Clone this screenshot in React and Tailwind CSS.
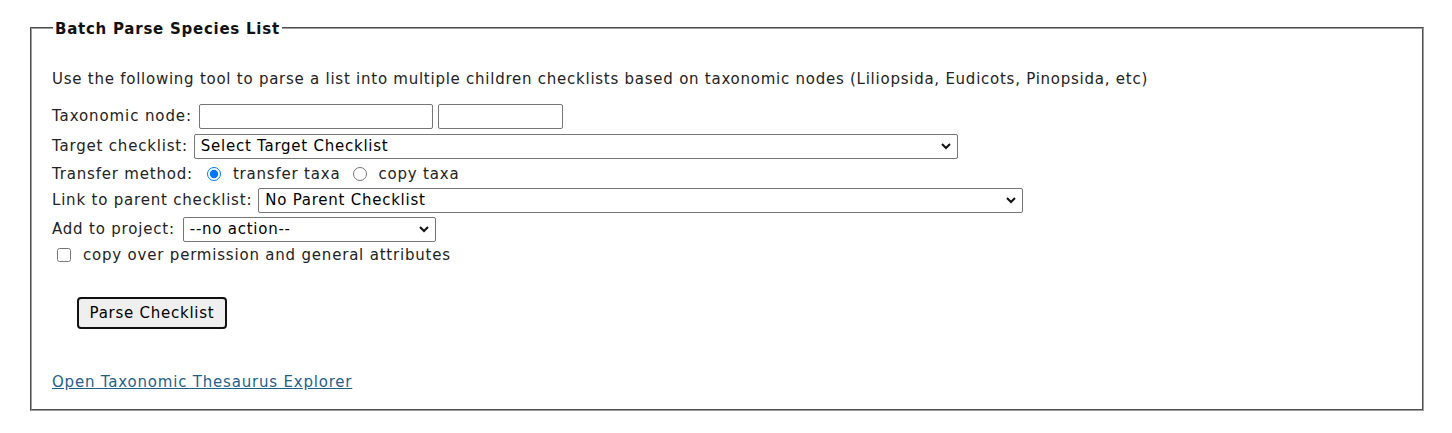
import { useState } from "react";

function Chevron() {
  return (
    <svg
      className="pointer-events-none absolute right-[6px] top-1/2 -translate-y-1/2"
      width="12"
      height="8"
      viewBox="0 0 12 8"
      fill="none"
    >
      <path d="M2 2l4 4 4-4" stroke="#111" strokeWidth="2" />
    </svg>
  );
}

function Select({ width, value }) {
  return (
    <div className="relative inline-block" style={{ width }}>
      <select className="h-[25px] w-full appearance-none rounded-[2px] border border-[#767676] bg-white pl-[6px] pr-6 text-[15px] tracking-[0.75px] text-black">
        <option>{value}</option>
      </select>
      <Chevron />
    </div>
  );
}

function App() {
  const [method, setMethod] = useState("transfer");

  return (
    <div
      className="min-h-[433px] bg-white pl-[30px] pt-[17px] text-[15px] tracking-[0.8px] text-[#222]"
      style={{ fontFamily: '"DejaVu Sans", Verdana, sans-serif' }}
    >
      <fieldset className="w-[1394px] border-2 border-[#a0a0a0] px-[20px] pb-[17px] pt-[31px] [border-style:groove]">
        <legend className="ml-[1px] px-[2px] pt-[3px] text-[15px] font-bold leading-[18px] tracking-[0.75px] text-[#111]">
          Batch Parse Species List
        </legend>

        <div className="flex h-[20px] items-center tracking-[0.75px]">
          Use the following tool to parse a list into multiple children checklists based on taxonomic nodes (Liliopsida, Eudicots, Pinopsida, etc)
        </div>

        <div className="mt-[14px] flex h-[26px] items-center">
          <span className="tracking-[0.9px]">Taxonomic node:</span>
          <input className="ml-[7px] h-[25px] w-[234px] rounded-[2px] border border-[#767676] bg-white" />
          <input className="ml-[5px] h-[25px] w-[125px] rounded-[2px] border border-[#767676] bg-white" />
        </div>

        <div className="mt-[4px] flex h-[26px] items-center gap-[6px]">
          <span>Target checklist:</span>
          <Select width={764} value="Select Target Checklist" />
        </div>

        <div className="mt-[2px] flex h-[26px] items-center">
          <span>Transfer method:</span>
          <input
            type="radio"
            name="method"
            checked={method === "transfer"}
            onChange={() => setMethod("transfer")}
            className="ml-[14px] mr-[12px] h-[14px] w-[14px] accent-[#0075ff]"
          />
          <span>transfer taxa</span>
          <input
            type="radio"
            name="method"
            checked={method === "copy"}
            onChange={() => setMethod("copy")}
            className="ml-[13px] mr-[11px] h-[14px] w-[14px] accent-[#0075ff]"
          />
          <span>copy taxa</span>
        </div>

        <div className="flex h-[26px] items-center gap-[6px]">
          <span>Link to parent checklist:</span>
          <Select width={765} value="No Parent Checklist" />
        </div>

        <div className="mt-[3px] flex h-[26px] items-center gap-[8px]">
          <span>Add to project:</span>
          <Select width={253} value="--no action--" />
        </div>

        <div className="flex h-[26px] items-center">
          <input type="checkbox" className="ml-[5px] mr-[12px] h-[14px] w-[14px]" />
          <span>copy over permission and general attributes</span>
        </div>

        <div className="mt-[29px] pl-[25px]">
          <button className="h-[32px] w-[150px] rounded-[4px] border-2 border-[#111] bg-[#efefef] text-[15px] tracking-[0.75px] text-black">
            Parse Checklist
          </button>
        </div>

        <div className="mt-[43px] flex h-[20px] items-center">
          <a href="#" className="text-[#1f5f8c] underline">
            Open Taxonomic Thesaurus Explorer
          </a>
        </div>
      </fieldset>
    </div>
  );
}

export default App;
